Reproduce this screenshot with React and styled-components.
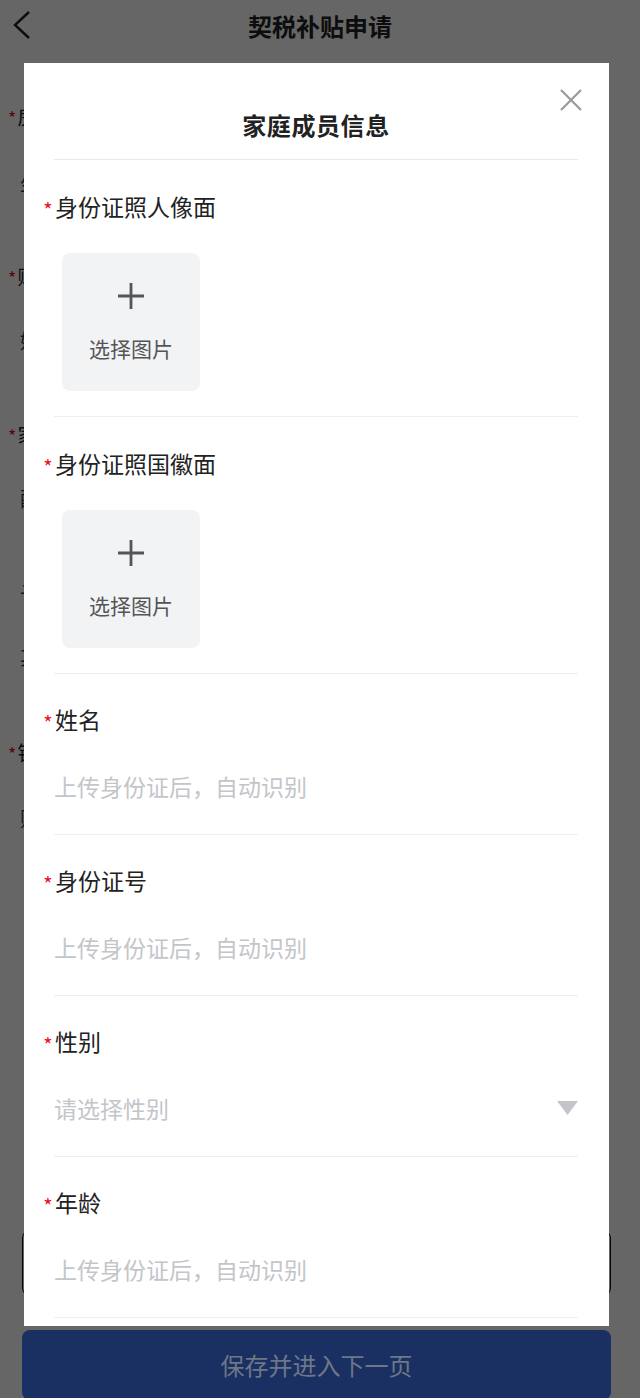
import styled, { createGlobalStyle } from "styled-components";

const GlobalStyle = createGlobalStyle`
  html, body {
    margin: 0;
    padding: 0;
    background: #fff;
  }
  * {
    box-sizing: border-box;
  }
  body {
    font-family: "Noto Sans CJK SC", "Noto Sans", sans-serif;
    color: #222;
  }
`;

const Page = styled.div`
  position: relative;
  width: 640px;
  height: 1398px;
  overflow: hidden;
  background: #fff;
`;

const NavBar = styled.div`
  height: 62px;
  display: flex;
  align-items: center;
  justify-content: center;
  position: relative;
  background: #fff;

  h1 {
    margin: 0;
    margin-top: -10px;
    font-size: 24px;
    font-weight: 700;
    line-height: 32px;
  }
`;

const BackButton = styled.div`
  position: absolute;
  left: 10px;
  top: 10px;
  width: 24px;
  height: 30px;
  display: flex;
`;

// page behind the popup: only its left edge shows
const BgForm = styled.div`
  padding: 0 8px;
`;

const BgItem = styled.div`
  padding-top: ${({ $top }) => $top}px;
  font-size: 20px;
  line-height: 30px;
`;

const BgLine = styled.div`
  margin-top: ${({ $gap }) => $gap}px;
  padding-left: 12px;
  font-size: 20px;
  line-height: 30px;
  color: #333;
`;

const BgStar = styled.span`
  color: #ee0a24;
  font-size: 18px;
  margin-right: 1px;
`;

const BgBox = styled.div`
  position: absolute;
  left: 22px;
  top: 1230px;
  width: 589px;
  height: 66px;
  border: 1.5px solid #111;
  border-radius: 8px;
`;

const Mask = styled.div`
  position: absolute;
  inset: 0;
  background: rgba(0, 0, 0, 0.6);
`;

const Dialog = styled.div`
  position: absolute;
  left: 24px;
  top: 63px;
  width: 585px;
  height: 1263px;
  background: #fff;
  overflow: hidden;
`;

const DialogHead = styled.div`
  margin: 0 31px 0 30px;
  height: 97px;
  padding-top: 46px;
  border-bottom: 1.5px solid #e8e9eb;
  text-align: center;

  h2 {
    margin: 0;
    font-size: 24px;
    line-height: 32px;
    font-weight: 700;
    color: #222;
    letter-spacing: 0.6px;
  }
`;

const CloseButton = styled.div`
  position: absolute;
  right: 26px;
  top: 25px;
  width: 24px;
  height: 24px;
`;

const DialogBody = styled.div`
  padding: 0 31px 0 30px;
`;

const Section = styled.div`
  padding-top: ${({ $top }) => $top}px;
  padding-bottom: ${({ $bottom }) => $bottom}px;
  border-bottom: 1.5px solid #eeeff1;
`;

const Label = styled.div`
  display: flex;
  align-items: flex-start;
  margin-left: -13px;
  height: 32px;
  font-size: 23px;
  line-height: 32px;
  color: #222;
`;

const Star = styled.span`
  flex: none;
  width: 14px;
  height: 32px;
  overflow: hidden;
  color: #ee0a24;
  font-size: 20px;
  line-height: 32px;
  transform: translateY(4px);
  text-align: center;
`;

const Uploader = styled.div`
  margin: 31px 0 0 8px;
  width: 138px;
  height: 138px;
  border-radius: 8px;
  background: #f2f3f5;
  display: flex;
  flex-direction: column;
  align-items: center;
  justify-content: center;
  gap: 24px;

  span {
    font-size: 21px;
    line-height: 28px;
    color: #555;
  }
`;

const FieldValue = styled.div`
  margin-top: 35px;
  height: 32px;
  display: flex;
  align-items: center;
  justify-content: space-between;
  font-size: 23px;
  line-height: 32px;
  color: #c3c5c9;
`;

const SubmitBar = styled.div`
  position: absolute;
  left: 22px;
  top: 1330px;
  width: 589px;
  height: 70px;
  border-radius: 8px;
  background: #1a3062;
  color: #6e7788;
  font-size: 24px;
  display: flex;
  align-items: center;
  justify-content: center;
  padding-bottom: 2px;
`;

const PlusIcon = () => (
  <svg width="28" height="28" viewBox="0 0 28 28">
    <path d="M14 1v26M1 14h26" stroke="#555" strokeWidth="2.8" fill="none" />
  </svg>
);

const CloseIcon = () => (
  <svg width="24" height="24" viewBox="0 0 24 24">
    <path d="M2 2l20 20M22 2L2 22" stroke="#9a9a9a" strokeWidth="2.2" fill="none" />
  </svg>
);

const Caret = () => (
  <svg width="21" height="14" viewBox="0 0 21 14">
    <path d="M0 0h21L10.5 14z" fill="#c3c5c9" />
  </svg>
);

const Chevron = () => (
  <svg width="24" height="30" viewBox="0 0 24 30">
    <path d="M19 2L5 15l14 13" stroke="#222" strokeWidth="2.4" fill="none" />
  </svg>
);

const uploads = ["身份证照人像面", "身份证照国徽面"];

const fields = [
  { label: "姓名", hint: "上传身份证后，自动识别" },
  { label: "身份证号", hint: "上传身份证后，自动识别" },
  { label: "性别", hint: "请选择性别", select: true },
  { label: "年龄", hint: "上传身份证后，自动识别" },
];

export default function App() {
  return (
    <Page>
      <GlobalStyle />
      <NavBar>
        <BackButton>
          <Chevron />
        </BackButton>
        <h1>契税补贴申请</h1>
      </NavBar>

      <BgForm>
        <BgItem $top={40}>
          <BgStar>*</BgStar>房
        </BgItem>
        <BgLine $gap={36}>坐</BgLine>
        <BgItem $top={64}>
          <BgStar>*</BgStar>购
        </BgItem>
        <BgLine $gap={34}>姓</BgLine>
        <BgItem $top={64}>
          <BgStar>*</BgStar>家
        </BgItem>
        <BgLine $gap={34}>配</BgLine>
        <BgLine $gap={64}>子</BgLine>
        <BgLine $gap={34}>其</BgLine>
        <BgItem $top={66}>
          <BgStar>*</BgStar>银
        </BgItem>
        <BgLine $gap={36}>账</BgLine>
      </BgForm>
      <BgBox />

      <Mask />

      <Dialog>
        <CloseButton>
          <CloseIcon />
        </CloseButton>
        <DialogHead>
          <h2>家庭成员信息</h2>
        </DialogHead>
        <DialogBody>
          {uploads.map((u) => (
            <Section key={u} $top={30} $bottom={25}>
              <Label>
                <Star>*</Star>
                <span>{u}</span>
              </Label>
              <Uploader>
                <PlusIcon />
                <span>选择图片</span>
              </Uploader>
            </Section>
          ))}
          {fields.map((f) => (
            <Section key={f.label} $top={29} $bottom={32}>
              <Label>
                <Star>*</Star>
                <span>{f.label}</span>
              </Label>
              <FieldValue>
                <span>{f.hint}</span>
                {f.select && <Caret />}
              </FieldValue>
            </Section>
          ))}
        </DialogBody>
      </Dialog>

      <SubmitBar>保存并进入下一页</SubmitBar>
    </Page>
  );
}
